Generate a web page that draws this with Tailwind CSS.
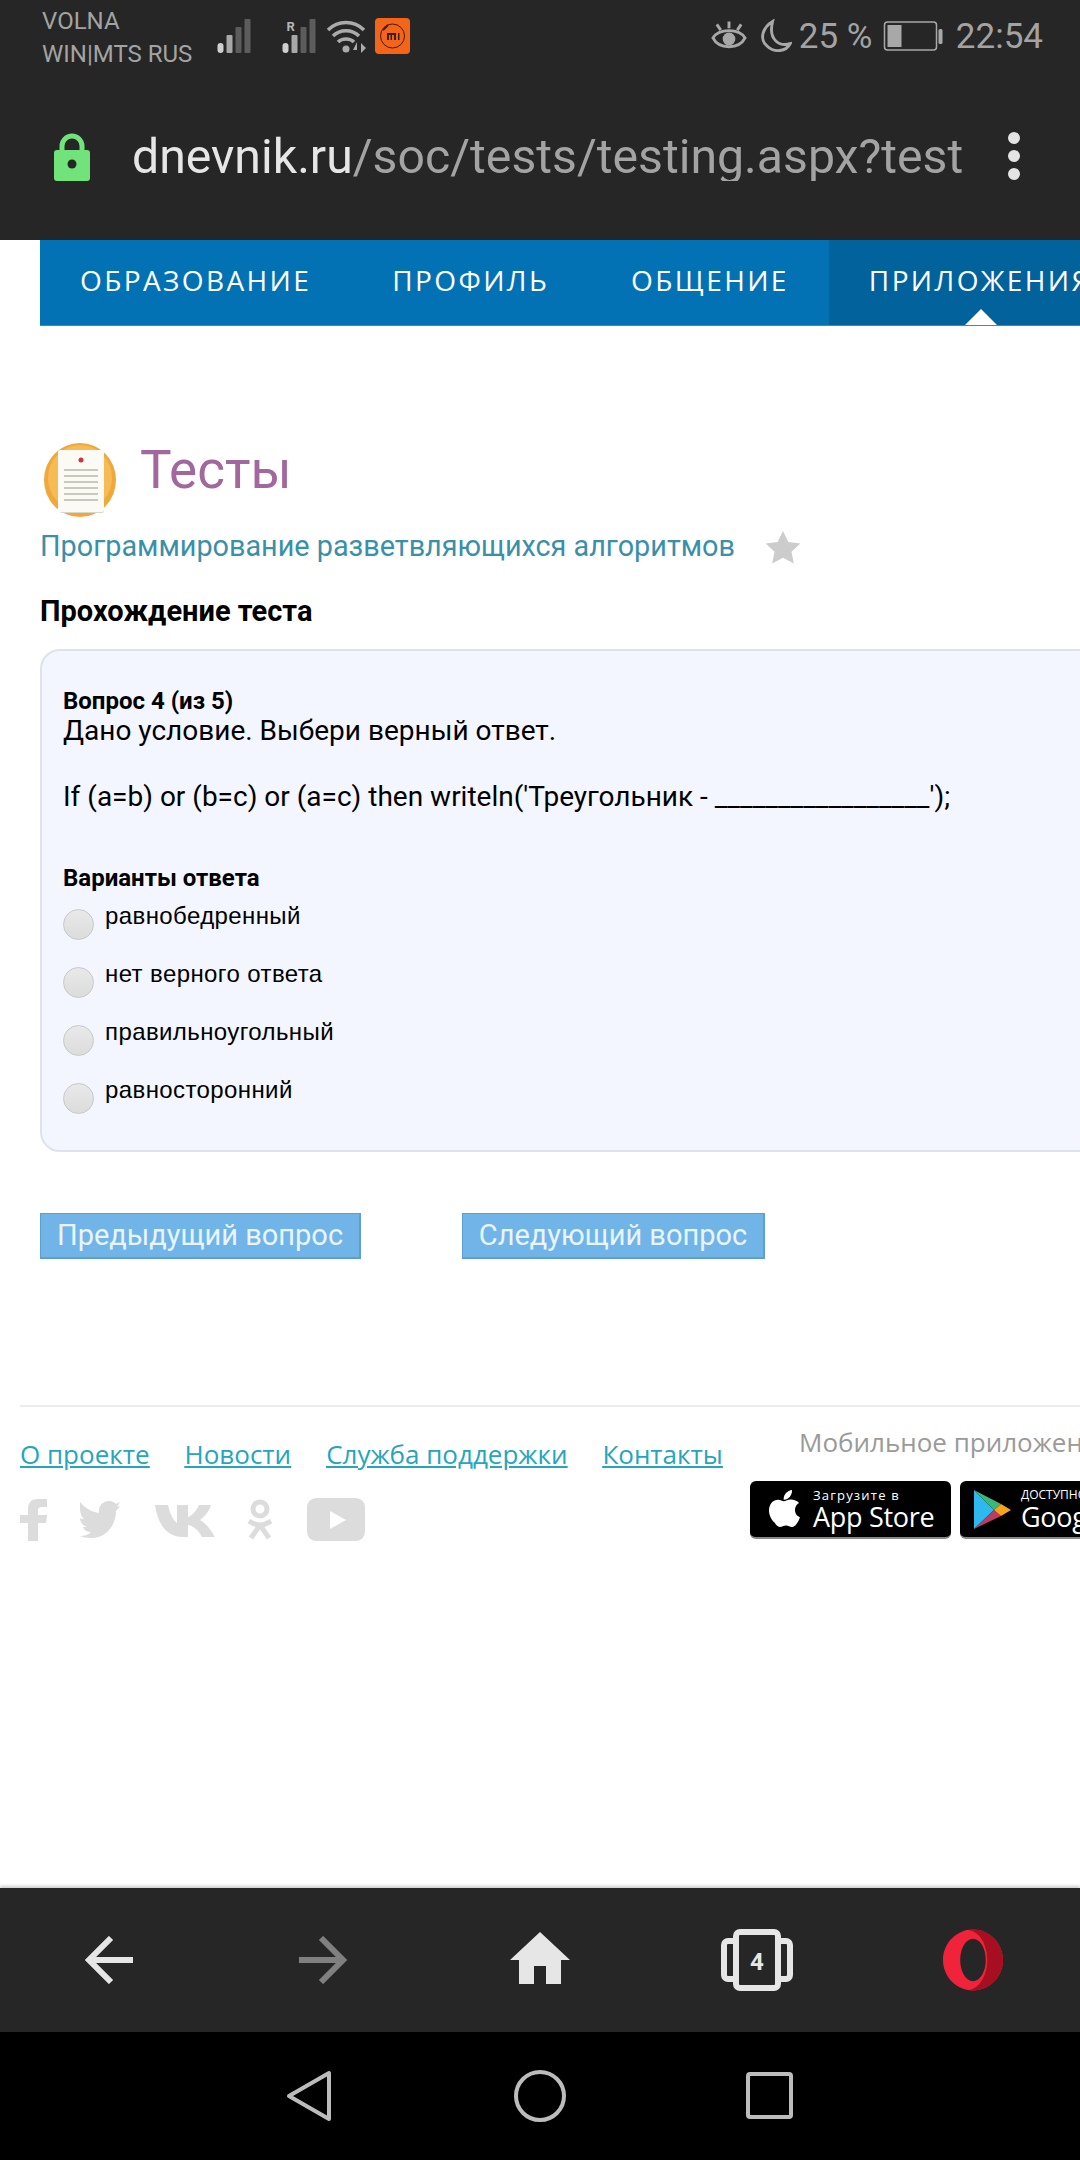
<!DOCTYPE html>
<html lang="ru">
<head>
  <meta charset="UTF-8">
  <meta name="viewport" content="width=device-width, initial-scale=1">
  <title>Тесты</title>
  <script src="https://cdn.jsdelivr.net/npm/@tailwindcss/browser@4"></script>
</head>
<body class="bg-white font-['Roboto',sans-serif]">
<div class="w-[1080px] h-[2160px] overflow-hidden flex flex-col">

  <!-- status bar + address bar -->
  <header class="h-[240px] shrink-0 bg-[#262626]">
    <div class="h-[72px] pl-[42px] pr-[37px] flex items-center justify-between text-[#a3a3a3]">
      <div class="flex items-center">
        <div class="w-[175px] text-[24px] leading-[33px] mt-[4px] whitespace-nowrap">VOLNA<br>WIN|MTS RUS</div>
        <svg class="w-[35px] h-[34px] -mt-[1px]" viewBox="0 0 34 34"><rect x="0" y="24" width="6" height="10" rx="3" fill="#cfcfcf"/><rect x="9" y="16" width="6" height="18" rx="1" fill="#a8a8a8"/><rect x="18" y="8" width="6" height="26" rx="1" fill="#5c5c5c"/><rect x="27" y="0" width="6" height="34" rx="1" fill="#5c5c5c"/></svg>
        <svg class="w-[35px] h-[34px] ml-[30px] -mt-[1px]" viewBox="0 0 34 34"><rect x="0" y="24" width="6" height="10" rx="3" fill="#cfcfcf"/><rect x="9" y="16" width="6" height="18" rx="1" fill="#a8a8a8"/><rect x="18" y="8" width="6" height="26" rx="1" fill="#5c5c5c"/><rect x="27" y="0" width="6" height="34" rx="1" fill="#5c5c5c"/><text x="4" y="12" font-size="13" font-weight="700" fill="#b5b5b5" font-family="Roboto">R</text></svg>
        <svg class="w-[40px] h-[36px] ml-[9px]" viewBox="0 0 40 36" fill="none" stroke="#ababab" stroke-width="3.5"><path d="M2 12C12 2 28 2 38 12"/><path d="M7 18C14 11 26 11 33 18"/><path d="M12 24C16 20 24 20 28 24"/><circle cx="20" cy="31" r="3.5" fill="#ababab" stroke="none"/><path d="M31 24l-4 8h4v4zM35 25l5 5-5 5z" fill="#ababab" stroke="none"/></svg>
        <svg class="w-[35px] h-[36px] ml-[9px]" viewBox="0 0 35 36"><rect width="35" height="36" rx="4" fill="#f4651a"/><circle cx="17.500" cy="18" r="12" fill="none" stroke="#3a2015" stroke-width="1"/><path d="M12 15h9v7h-2v-5h-2v5h-1.500v-5h-1.500v5h-2zM23 15h1.500v7H23z" fill="#3a2015"/><path d="M8 12l5-5" stroke="#3a2015" stroke-width="2"/></svg>
      </div>
      <div class="flex items-center">
        <svg class="w-[36px] h-[34px]" viewBox="0 0 37 34" fill="none" stroke="#a8a8a8" stroke-width="3"><path d="M2 19C8 9 29 9 35 19C29 31 8 31 2 19Z"/><circle cx="18.500" cy="20" r="6.500" fill="#a8a8a8" stroke="none"/><path d="M18.500 2v7M6 5l4 6M31 5l-4 6"/></svg>
        <svg class="w-[33px] h-[34px] ml-[12px]" viewBox="0 0 34 34" fill="none" stroke="#a8a8a8" stroke-width="3"><path d="M14 2C4 8 0 20 8 27C16 35 28 33 32 25C22 28 9 22 14 2Z"/></svg>
        <span class="text-[35px] leading-none ml-[7px] w-[84px] whitespace-nowrap">25 %</span>
        <svg class="w-[61px] h-[30px]" viewBox="0 0 60 30"><rect x="1" y="1" width="52" height="28" rx="3" fill="none" stroke="#a8a8a8" stroke-width="1.500"/><rect x="4" y="4" width="14" height="22" fill="#a8a8a8"/><rect x="55" y="8" width="4" height="15" rx="1.500" fill="#a8a8a8"/></svg>
        <span class="text-[35px] leading-none ml-[12px]">22:54</span>
      </div>
    </div>
    <div class="mt-[34px] h-[100px] pl-[54px] flex items-center">
      <svg class="w-[36px] h-[49px] shrink-0" viewBox="0 0 36 49"><path d="M8 22V14a10 10 0 0 1 20 0v8" fill="none" stroke="#72e27a" stroke-width="5"/><rect y="18" width="36" height="31" rx="3" fill="#72e27a"/><circle cx="18" cy="32" r="4.500" fill="#262626"/></svg>
      <div class="ml-[42px] w-[830px] overflow-hidden whitespace-nowrap text-[48.200px] leading-none pt-[2px] text-[#a3a3a3]"><span class="text-[#e6e6e6]">dnevnik.ru</span>/soc/tests/testing.aspx?test</div>
      <div class="ml-[46px] flex flex-col gap-[6px]">
        <span class="w-[12px] h-[12px] rounded-full bg-[#e4e4e4]"></span>
        <span class="w-[12px] h-[12px] rounded-full bg-[#e4e4e4]"></span>
        <span class="w-[12px] h-[12px] rounded-full bg-[#e4e4e4]"></span>
      </div>
    </div>
  </header>

  <!-- page -->
  <main class="flex-1 min-h-0 flex flex-col">
    <nav class="ml-[40px] w-[1040px] h-[86px] shrink-0 bg-[#0272b5] flex text-white font-['Open_Sans',sans-serif] text-[28px] tracking-[2.400px] leading-[80px] border-b border-[#2a90c8] whitespace-nowrap">
      <span class="ml-[40px]">ОБРАЗОВАНИЕ</span>
      <span class="ml-[81px]">ПРОФИЛЬ</span>
      <span class="ml-[82px]">ОБЩЕНИЕ</span>
      <span class="relative ml-[40px] pl-[40px] flex-1 bg-[#02629c]">ПРИЛОЖЕНИЯ
        <span class="absolute left-[136px] bottom-0 w-0 h-0 border-x-[16px] border-x-transparent border-b-[16px] border-b-white"></span>
      </span>
    </nav>

    <section class="pl-[40px]">
      <div class="mt-[115px] flex items-center h-[78px]">
        <svg class="w-[78px] h-[78px] shrink-0" viewBox="0 0 78 78">
          <ellipse cx="40" cy="39" rx="36" ry="37" fill="#eea83c"/>
          <ellipse cx="40" cy="37" rx="32" ry="33" fill="#f7bb55"/>
          <rect x="20" y="12" width="44" height="60" rx="2" fill="#d9d5c8"/>
          <rect x="18" y="9" width="46" height="62" rx="2" fill="#fbfaf4"/>
          <circle cx="41" cy="19" r="2.500" fill="#d0323a"/>
          <path d="M24 29h34M24 35h34M24 41h34M24 47h34M24 53h34M24 59h34" stroke="#c9c9c0" stroke-width="2"/>
        </svg>
        <h1 class="ml-[22px] mb-[20px] text-[53px] leading-none font-normal text-[#a2689e]">Тесты</h1>
      </div>
      <div class="mt-[6px] flex items-center h-[44px]">
        <a class="text-[28.800px] text-[#3a8fa9] whitespace-nowrap">Программирование разветвляющихся алгоритмов</a>
        <svg class="ml-[30px] w-[36px] h-[34px]" viewBox="0 0 36 34"><path d="M18 1l5.300 11 12 1.500-8.800 8.200 2.300 11.800L18 27.700 7.200 33.500l2.300-11.800L.7 13.500l12-1.500z" fill="#cccccc"/></svg>
      </div>
      <h2 class="mt-[25px] text-[29px] leading-[34px] font-bold text-black">Прохождение теста</h2>

      <div class="mt-[21px] w-[1100px] h-[503px] bg-[#f3f6fe] border-2 border-[#dde3ec] rounded-[20px] pl-[21px] pt-[35px] text-black">
        <p class="text-[24px] leading-[30px] font-bold">Вопрос 4 (из 5)</p>
        <p class="text-[28px] leading-[32px] -mt-[1px]">Дано условие. Выбери верный ответ.</p>
        <p class="text-[28px] leading-[32px] mt-[34px]">If (a=b) or (b=c) or (a=c) then writeln('Треугольник - _________________');</p>
        <p class="mt-[50px] text-[24px] leading-[30px] font-bold">Варианты ответа</p>
        <ul class="mt-[9px] flex flex-col gap-[26px] text-[24px] tracking-[0.400px] font-['Liberation_Sans',sans-serif]">
          <li class="flex items-start h-[32px]"><span class="w-[31px] h-[31px] mt-[7px] rounded-full border border-[#c8c8c8] bg-linear-to-b from-[#e9e9e9] to-[#dcdcdc]"></span><span class="ml-[11px] leading-[28px]">равнобедренный</span></li>
          <li class="flex items-start h-[32px]"><span class="w-[31px] h-[31px] mt-[7px] rounded-full border border-[#c8c8c8] bg-linear-to-b from-[#e9e9e9] to-[#dcdcdc]"></span><span class="ml-[11px] leading-[28px]">нет верного ответа</span></li>
          <li class="flex items-start h-[32px]"><span class="w-[31px] h-[31px] mt-[7px] rounded-full border border-[#c8c8c8] bg-linear-to-b from-[#e9e9e9] to-[#dcdcdc]"></span><span class="ml-[11px] leading-[28px]">правильноугольный</span></li>
          <li class="flex items-start h-[32px]"><span class="w-[31px] h-[31px] mt-[7px] rounded-full border border-[#c8c8c8] bg-linear-to-b from-[#e9e9e9] to-[#dcdcdc]"></span><span class="ml-[11px] leading-[28px]">равносторонний</span></li>
        </ul>
      </div>

      <div class="mt-[61px] flex gap-[101px]">
        <button class="w-[321px] h-[46px] bg-[#70b4e8] border border-[#5d9fd0] border-r-2 border-b-2 text-[29px] leading-none text-[#e8f5ff]">Предыдущий вопрос</button>
        <button class="w-[303px] h-[46px] bg-[#70b4e8] border border-[#5d9fd0] border-r-2 border-b-2 text-[29px] leading-none text-[#e8f5ff]">Следующий вопрос</button>
      </div>
    </section>

    <footer class="mt-[146px] ml-[20px] border-t-2 border-[#ececec] flex font-['Open_Sans',sans-serif]">
      <div class="w-[730px] shrink-0">
        <div class="mt-[29px] flex gap-[35px] text-[26px] leading-[36px] text-[#26a5bd] underline whitespace-nowrap">
          <a>О проекте</a><a>Новости</a><a>Служба поддержки</a><a>Контакты</a>
        </div>
        <div class="mt-[26px] flex items-center text-[#dcdcdc]">
          <svg class="w-[27px] h-[42px]" viewBox="0 0 27 42" fill="currentColor"><path d="M8 42V24H0v-8h8V10C8 3 12 0 18 0h9v8h-5c-3 0-4 1-4 4v4h9l-1 8h-8v18z"/></svg>
          <svg class="ml-[33px] w-[40px] h-[38px]" viewBox="0 0 40 38" fill="currentColor"><path d="M0 1C6 8 12 11 19 12C18 5 23 0 29 0C33 0 35 2 36 3L40 1L37 6L40 5C38 8 37 9 36 10C36 24 26 38 10 37C6 37 3 36 0 35C4 35 8 34 11 31C7 31 4 29 3 26H7C3 25 0 21 0 17C1 18 3 18 4 18C0 15-1 6 0 1Z"/></svg>
          <svg class="ml-[35px] w-[60px] h-[36px] mt-[2px]" viewBox="0 0 60 36" fill="currentColor"><path d="M0 2H13C15 12 19 18 22 20V2H33V14C37 13 41 8 44 2H56C54 9 49 14 45 17C50 20 55 25 60 34H47C44 28 39 23 33 22V34H28C12 34 3 22 0 2Z"/></svg>
          <svg class="ml-[31px] w-[28px] h-[42px]" viewBox="0 0 28 42" fill="none" stroke="currentColor" stroke-width="5"><circle cx="14" cy="10" r="7"/><path d="M3 22C10 27 18 27 25 22M14 26L5 39M14 26L23 39"/></svg>
          <svg class="ml-[33px] w-[58px] h-[43px]" viewBox="0 0 58 43"><rect width="58" height="43" rx="9" fill="currentColor"/><path d="M23 13l16 9-16 9z" fill="#fff"/></svg>
        </div>
      </div>
      <div class="whitespace-nowrap">
        <div class="mt-[17px] ml-[49px] text-[26px] leading-[36px] text-[#9a9a9a]">Мобильное приложение</div>
        <div class="mt-[21px] flex gap-[9px]">
          <div class="w-[201px] h-[58px] shrink-0 rounded-[6px] bg-black border-b-2 border-[#888] flex items-center text-white">
            <svg class="ml-[18px] w-[32px] h-[38px] shrink-0" viewBox="0 0 32 38" fill="#fff"><path d="M24 0c.3 3-1 5.500-2.300 7-1.500 1.700-3.800 3-6 2.800-.3-2.600 1-5.200 2.300-6.700C19.500 1.400 22 .2 24 0zM31 13c-.3.200-4 2.400-4 7 0 5.400 4.700 7.200 5 7.300-.1.300-.8 2.700-2.500 5.200-1.500 2.200-3 4.400-5.500 4.400s-3.200-1.500-6-1.500-3.800 1.500-6 1.500-4-2.100-5.500-4.300C3.400 29.800 1 25 1 20.500c0-7 4.600-10.800 9-10.800 2.400 0 4.400 1.600 6 1.600s3.700-1.700 6.400-1.700c1 0 5.800.1 8.600 3.400z"/></svg>
            <div class="ml-[13px]">
              <div class="text-[13px] leading-[14px] tracking-[1.200px]">Загрузите в</div>
              <div class="text-[27px] leading-[29px] -tracking-[0.300px]">App Store</div>
            </div>
          </div>
          <div class="w-[201px] h-[58px] shrink-0 rounded-[6px] bg-black border-b-2 border-[#888] flex items-center text-white">
            <svg class="ml-[14px] w-[37px] h-[39px] shrink-0" viewBox="0 0 37 39"><path d="M0 0L20 20 0 39z" fill="#2fb8ee"/><path d="M0 0L27 14 20 20z" fill="#3bb878"/><path d="M0 39L20 20 27 26z" fill="#bd3a62"/><path d="M27 14L37 20 27 26 20 20z" fill="#f7a41c"/></svg>
            <div class="ml-[10px]">
              <div class="text-[12px] leading-[14px]">ДОСТУПНО В</div>
              <div class="text-[27px] leading-[29px] -tracking-[0.300px]">Google Play</div>
            </div>
          </div>
        </div>
      </div>
    </footer>
  </main>

  <!-- browser toolbar -->
  <div class="h-[144px] shrink-0 bg-[#262626] shadow-[0_-2px_3px_rgba(0,0,0,0.2)] flex items-center relative">
    <svg class="absolute left-[84px] top-[48px] w-[49px] h-[48px]" viewBox="0 0 49 48" fill="none" stroke="#e6e6e6" stroke-width="6"><path d="M49 24H4M27 2L5 24l22 22"/></svg>
    <svg class="absolute left-[299px] top-[48px] w-[49px] h-[48px]" viewBox="0 0 49 48" fill="none" stroke="#808080" stroke-width="6"><path d="M0 24H45M22 2l22 22-22 22"/></svg>
    <svg class="absolute left-[510px] top-[44px] w-[60px] h-[52px]" viewBox="0 0 60 52" fill="#e6e6e6"><path d="M30 0L60 28H51V52H36V34H24V52H9V28H0z"/></svg>
    <svg class="absolute left-[721px] top-[41px] w-[72px] h-[62px]" viewBox="0 0 72 62" fill="none" stroke="#e6e6e6" stroke-width="6"><rect x="15" y="3" width="42" height="56" rx="4"/><path d="M15 12H7a4 4 0 0 0-4 4v30a4 4 0 0 0 4 4h8M57 12h8a4 4 0 0 1 4 4v30a4 4 0 0 1-4 4h-8"/><text x="36" y="41" text-anchor="middle" font-size="24" font-weight="700" font-family="Roboto" fill="#e6e6e6" stroke="none">4</text></svg>
    <svg class="absolute left-[943px] top-[41px] w-[60px] h-[62px]" viewBox="0 0 61 62"><path d="M30.500 0C13.700 0 0 13.900 0 31s13.700 31 30.500 31S61 48.100 61 31 47.300 0 30.500 0zm0 9.500c-7.200 0-13 9.600-13 21.500s5.800 21.500 13 21.500 13-9.600 13-21.500-5.800-21.500-13-21.500z" fill="#f0233a" fill-rule="evenodd"/><path d="M26 .4C37 2 45 15 45 31S37 60 26 61.600C28 61.900 29 62 30.500 62 47.300 62 61 48.100 61 31S47.300 0 30.500 0C29 0 28 .1 26 .4z" fill="#a60f1f"/></svg>
  </div>

  <!-- android nav -->
  <div class="h-[128px] shrink-0 bg-black relative">
    <svg class="absolute left-[286px] top-[38px] w-[46px] h-[52px]" viewBox="0 0 46 52" fill="none" stroke="#bcbcbc" stroke-width="4" stroke-linejoin="round"><path d="M43 3V49L3 26z"/></svg>
    <svg class="absolute left-[514px] top-[38px] w-[52px] h-[52px]" viewBox="0 0 52 52" fill="none" stroke="#bcbcbc" stroke-width="4"><circle cx="26" cy="26" r="24"/></svg>
    <svg class="absolute left-[746px] top-[40px] w-[47px] h-[47px]" viewBox="0 0 47 47" fill="none" stroke="#bcbcbc" stroke-width="4"><rect x="2" y="2" width="43" height="43" rx="2"/></svg>
  </div>
</div>
</body>
</html>
